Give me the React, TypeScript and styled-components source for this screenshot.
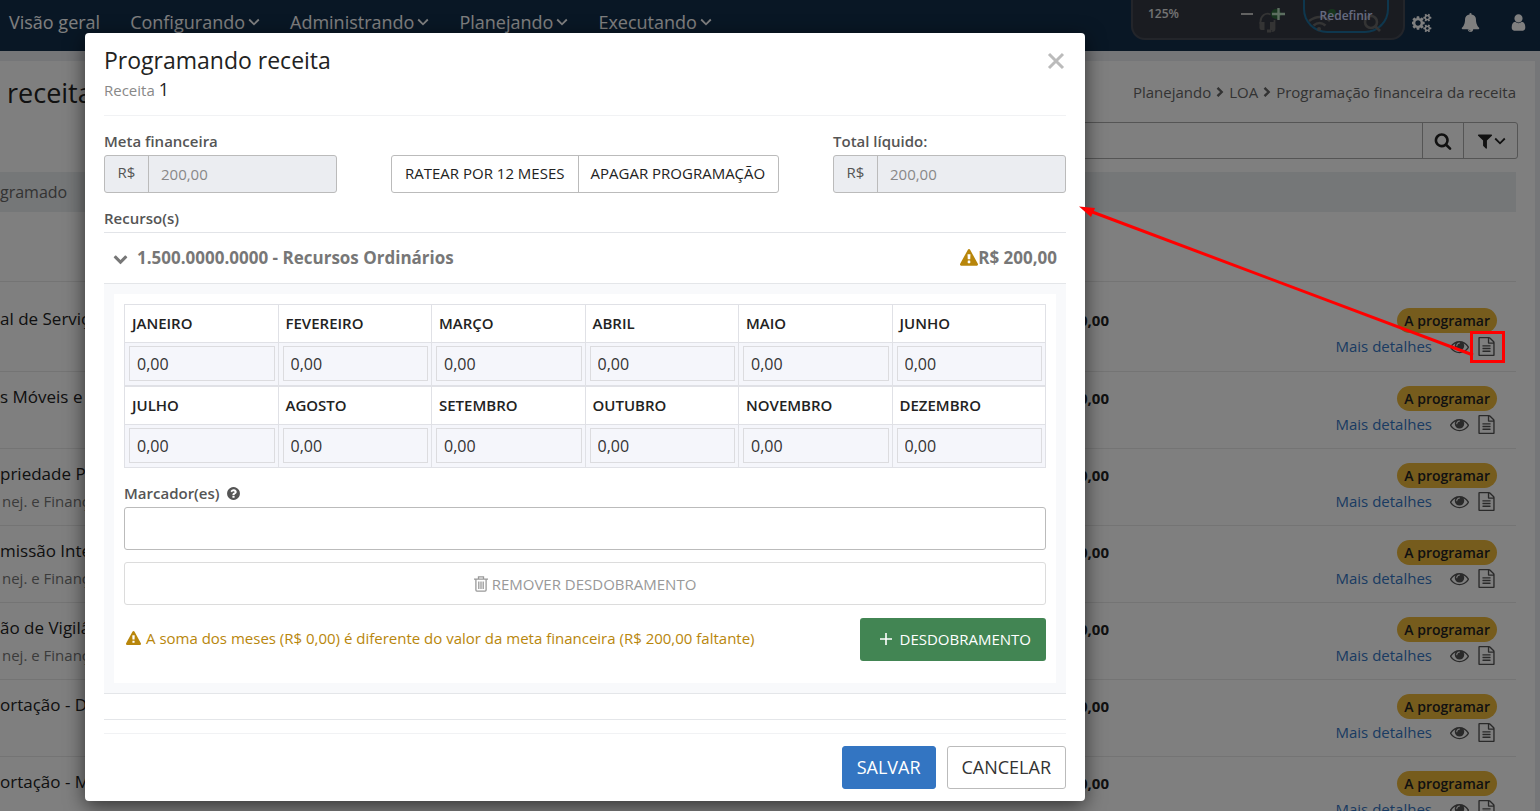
import React from "react";
import styled, { createGlobalStyle } from "styled-components";

const GlobalStyle = createGlobalStyle`
  *, *::before, *::after { box-sizing: border-box; }
  html, body { margin: 0; padding: 0; }
  body { font-family: "Open Sans", "Noto Sans", sans-serif; font-size: 15px; line-height: 20px; color: #222; overflow: hidden; }
  button, input { font-family: inherit; font-size: inherit; }
  button { cursor: pointer; margin: 0; }
  h1, h2, p { margin: 0; font-weight: 400; }
`;

/* ---------- icons ---------- */

const ICONS = {
  chevronDown: "M1683 808l-742 741q-19 19-45 19t-45-19l-742-741q-19-19-19-45.500t19-45.500l166-165q19-19 45-19t45 19l531 531 531-531q19-19 45-19t45 19l166 165q19 19 19 45.500t-19 45.500z",
  search: "M1216 832q0-185-131.500-316.500t-316.500-131.500-316.500 131.500-131.500 316.500 131.500 316.500 316.500 131.500 316.500-131.500 131.500-316.500zm512 832q0 52-38 90t-90 38q-54 0-90-38l-343-342q-179 124-399 124-143 0-273.500-55.500t-225-150-150-225-55.500-273.500 55.500-273.500 150-225 225-150 273.500-55.500 273.500 55.500 225 150 150 225 55.500 273.500q0 220-124 399l343 343q37 37 37 90z",
  filter: "M1595 295q17 41-14 70l-493 493v742q0 42-39 59-13 5-25 5-27 0-45-19l-256-256q-19-19-19-45v-486l-493-493q-31-29-14-70 17-39 59-39h1280q42 0 59 39z",
  eye: "M1664 960q-152-236-381-353 61 104 61 225 0 185-131.500 316.500t-316.500 131.500-316.500-131.500-131.500-316.500q0-121 61-225-229 117-381 353 133 205 333.500 326.500t434.500 121.500 434.500-121.500 333.500-326.500zm-720-384q0-20-14-34t-34-14q-125 0-214.500 89.500t-89.500 214.500q0 20 14 34t34 14 34-14 14-34q0-86 61-147t147-61q20 0 34-14t14-34zm848 384q0 34-20 69-140 230-376.500 368.500t-499.500 138.500-499.500-139-376.500-368q-20-35-20-69t20-69q140-229 376.500-368t499.500-139 499.500 139 376.500 368q20 35 20 69z",
  fileText: "M1596 380q28 28 48 76t20 88v1152q0 40-28 68t-68 28h-1344q-40 0-68-28t-28-68v-1600q0-40 28-68t68-28h896q40 0 88 20t76 48zm-444-244v376h376q-10-29-22-41l-313-313q-12-12-41-22zm384 1528v-1024h-416q-40 0-68-28t-28-68v-416h-768v1536h1280zm-1024-864q0-14 9-23t23-9h704q14 0 23 9t9 23v64q0 14-9 23t-23 9h-704q-14 0-23-9t-9-23v-64zm736 224q14 0 23 9t9 23v64q0 14-9 23t-23 9h-704q-14 0-23-9t-9-23v-64q0-14 9-23t23-9h704zm0 256q14 0 23 9t9 23v64q0 14-9 23t-23 9h-704q-14 0-23-9t-9-23v-64q0-14 9-23t23-9h704z",
  warning: "M1024 1375v-190q0-14-9.500-23.500t-22.500-9.500h-192q-13 0-22.500 9.500t-9.500 23.500v190q0 14 9.500 23.500t22.500 9.500h192q13 0 22.500-9.500t9.500-23.500zm-2-374l18-459q0-12-10-19-13-11-24-11h-220q-11 0-24 11-10 7-10 21l17 457q0 10 10 16.500t24 6.500h185q14 0 23.500-6.500t10.500-16.500zm-14-934l768 1408q35 63-2 126-17 29-46.500 46t-63.500 17h-1536q-34 0-63.500-17t-46.500-46q-37-63-2-126l768-1408q17-31 47-49t65-18 65 18 47 49z",
  question: "M1024 1376v-192q0-14-9-23t-23-9h-192q-14 0-23 9t-9 23v192q0 14 9 23t23 9h192q14 0 23-9t9-23zm256-672q0-88-55.500-163t-138.500-116-170-41q-243 0-371 213-15 24 8 42l132 100q7 6 19 6 16 0 25-12 53-68 86-92 34-24 86-24 48 0 85.500 26t37.500 59q0 38-20 61t-68 45q-63 28-115.500 86.500t-52.500 125.500v36q0 14 9 23t23 9h192q14 0 23-9t9-23q0-19 21.500-49.500t54.500-49.500q32-18 49-28.500t46-35 44.500-48 28-60.500 12.500-81zm384 192q0 209-103 385.500t-279.500 279.500-385.500 103-385.500-103-279.500-279.500-103-385.500 103-385.500 279.500-279.500 385.500-103 385.500 103 279.500 279.500 103 385.500z",
  bell: "M912 1696q0-16-16-16-59 0-101.500-42.500t-42.500-101.500q0-16-16-16t-16 16q0 73 51.500 124.500t124.500 51.500q16 0 16-16zm816-288q0 52-38 90t-90 38h-448q0 106-75 181t-181 75-181-75-75-181h-448q-52 0-90-38t-38-90q50-42 91-88t85-119.500 74.500-158.500 50-206 19.500-260q0-152 117-282.500t307-158.500q-8-19-8-39 0-40 28-68t68-28 68 28 28 68q0 20-8 39 190 28 307 158.500t117 282.500q0 139 19.500 260t50 206 74.500 158.500 85 119.500 91 88z",
  user: "M1536 1399q0 109-62.500 187t-150.500 78h-854q-88 0-150.500-78t-62.500-187q0-85 8.500-160.500t31.500-152 58.500-131 94-89 134.500-34.500q131 128 313 128t313-128q76 0 134.500 34.500t94 89 58.500 131 31.500 152 8.500 160.500zm-256-887q0 159-112.500 271.500t-271.500 112.500-271.500-112.500-112.500-271.500 112.500-271.500 271.500-112.500 271.500 112.500 112.500 271.500z",
  cogs: "M832 896q0-106-75-181t-181-75-181 75-75 181 75 181 181 75 181-75 75-181zm768 512q0-52-38-90t-90-38-90 38-38 90q0 53 37.500 90.500t90.500 37.500 90.500-37.500 37.500-90.500zm0-1024q0-52-38-90t-90-38-90 38-38 90q0 53 37.500 90.500t90.500 37.500 90.500-37.500 37.500-90.500zm-384 421v185q0 10-7 19.500t-16 10.500l-155 24q-11 35-32 76 34 48 90 115 7 11 7 20 0 12-7 19-23 30-82.500 89.500t-78.500 59.500q-11 0-21-7l-115-90q-37 19-77 31-11 108-23 155-7 24-30 24h-186q-11 0-20-7.500t-10-17.500l-23-153q-34-10-75-31l-118 89q-7 7-20 7-11 0-21-8-144-133-144-160 0-9 7-19 10-14 41-53t47-61q-23-44-35-82l-152-24q-10-1-17-9.500t-7-19.500v-185q0-10 7-19.500t16-10.500l155-24q11-35 32-76-34-48-90-115-7-11-7-20 0-12 7-20 22-30 82-89t79-59q11 0 21 7l115 90q34-18 77-32 11-108 23-154 7-24 30-24h186q11 0 20 7.500t10 17.500l23 153q34 10 75 31l118-89q8-7 20-7 11 0 21 8 144 133 144 160 0 8-7 19-12 16-42 54t-45 60q23 48 34 82l152 23q10 2 17 10.500t7 19.500zm640 533v140q0 16-149 31-12 27-30 52 51 113 51 138 0 4-4 7-122 71-124 71-8 0-46-47t-52-68q-20 2-30 2t-30-2q-14 21-52 68t-46 47q-2 0-124-71-4-3-4-7 0-25 51-138-18-25-30-52-149-15-149-31v-140q0-16 149-31 13-29 30-52-51-113-51-138 0-4 4-7 4-2 35-20t59-34 30-16q8 0 46 46.500t52 67.500q20-2 30-2t30 2q51-71 92-112l6-2q4 0 124 70 4 3 4 7 0 25-51 138 17 23 30 52 149 15 149 31zm0-1024v140q0 16-149 31-12 27-30 52 51 113 51 138 0 4-4 7-122 71-124 71-8 0-46-47t-52-68q-20 2-30 2t-30-2q-14 21-52 68t-46 47q-2 0-124-71-4-3-4-7 0-25 51-138-18-25-30-52-149-15-149-31v-140q0-16 149-31 13-29 30-52-51-113-51-138 0-4 4-7 4-2 35-20t59-34 30-16q8 0 46 46.500t52 67.500q20-2 30-2t30 2q51-71 92-112l6-2q4 0 124 70 4 3 4 7 0 25-51 138 17 23 30 52 149 15 149 31z",
};

const Svg = styled.svg`
  display: block;
  flex: none;
  fill: currentColor;
`;

type IconProps = { name: keyof typeof ICONS; size: number; wide?: boolean };

const Icon = ({ name, size, wide }: IconProps) => (
  <Svg width={size} height={size} viewBox={wide ? "0 0 1920 1792" : "0 0 1792 1792"} aria-hidden="true">
    <path d={ICONS[name]} />
  </Svg>
);

const AngleDown = () => (
  <Svg width="12" height="8" viewBox="0 0 12 8" aria-hidden="true">
    <path d="M1.200 1.500l4.800 4.800 4.800-4.800" fill="none" stroke="currentColor" strokeWidth="1.800" />
  </Svg>
);

const CrumbChevron = () => (
  <Svg width="8" height="10" viewBox="0 0 8 10" aria-hidden="true">
    <path d="M1.500 .8l4.200 4.200-4.200 4.200" fill="none" stroke="currentColor" strokeWidth="2.400" />
  </Svg>
);

const TrashIcon = () => (
  <Svg width="14" height="16" viewBox="0 0 14 16" aria-hidden="true">
    <path
      d="M0 3.200h14M4.500 3V.9h5V3M1.900 3.500v10.600q0 1 1 1h8.200q1 0 1-1V3.500M4.800 5.500v7.500M7 5.500v7.500M9.200 5.500v7.500"
      fill="none"
      stroke="currentColor"
      strokeWidth="1.300"
    />
  </Svg>
);

/* ---------- page behind the dialog ---------- */

const Screen = styled.div`
  position: relative;
  height: 100vh;
  overflow: hidden;
  background: #ebedf1;
`;

const TopBar = styled.header`
  position: relative;
  display: flex;
  align-items: center;
  height: 51px;
  padding: 0 12px 8px 9px;
  background: #132e4b;
  color: #fff;
`;

const Nav = styled.nav`
  display: flex;
  gap: 30px;
  flex: 1;
`;

const NavLink = styled.a`
  display: flex;
  align-items: center;
  gap: 3px;
  color: inherit;
  text-decoration: none;
  font-size: 18px;
  line-height: 24px;
  white-space: nowrap;
`;

const TopActions = styled.div`
  display: flex;
  align-items: center;
  gap: 29px;
  padding-top: 2px;
`;

const IconButton = styled.button`
  display: flex;
  padding: 0;
  border: 0;
  background: none;
  color: inherit;
`;

const ZoomPopup = styled.div`
  position: absolute;
  top: 0;
  right: 135px;
  display: flex;
  width: 274px;
  height: 40px;
  padding: 0 14px 0 15px;
  border: 2px solid #474b55;
  border-top: 0;
  border-radius: 0 0 14px 14px;
  background: #343843;
  font-size: 12px;
  font-weight: 600;
  line-height: 28px;
  color: #e6e6e6;
`;

const ZoomLevel = styled.span`
  flex: 1;
`;

const ZoomTools = styled.svg`
  flex: none;
  margin-right: 16px;
`;

const ResetButton = styled.button`
  position: relative;
  width: 86px;
  height: 33px;
  padding: 0;
  border: 2px solid #1d6f9c;
  border-top: 0;
  border-radius: 0 0 24px 24px;
  background: none;
  color: #cdd6ff;
  font-size: 12px;
  font-weight: 600;
  line-height: 28px;
`;

const ResetText = styled.span`
  position: relative;
`;

const ResetGhosts = styled.svg`
  position: absolute;
  left: 0;
  top: 0;
`;

const Card = styled.main`
  margin: 10px 5px 0 0;
  padding: 13px 19px 0 0;
  min-height: 100vh;
  background: #fff;
`;

const PageHead = styled.div`
  display: flex;
  align-items: center;
  justify-content: space-between;
  height: 38px;
  padding-left: 7px;
`;

const PageTitle = styled.h1`
  font-size: 27px;
  line-height: 38px;
`;

const Crumbs = styled.nav`
  display: flex;
  align-items: center;
  gap: 5px;
  padding-bottom: 2px;
  color: #666;
`;

const CrumbLink = styled.a`
  color: inherit;
  text-decoration: none;
`;

const SearchBar = styled.form`
  display: flex;
  height: 37px;
  margin: 10px -2px 13px 30%;
  border: 1px solid #aaa;
  border-radius: 3px;
`;

const SearchInput = styled.input`
  flex: 1;
  border: 0;
  background: none;
  outline: 0;
`;

const SearchButton = styled.button<{ $width: number }>`
  display: flex;
  align-items: center;
  justify-content: center;
  width: ${(p) => p.$width}px;
  padding: 0;
  border: 0;
  border-left: 1px solid #aaa;
  background: none;
  color: #222;
`;

const ListHead = styled.div`
  height: 40px;
  margin-bottom: 69px;
  background: #ebeef1;
  color: #666;
  font-size: 16px;
  line-height: 40px;
`;

const Row = styled.div<{ $tall?: boolean }>`
  display: grid;
  grid-template-columns: 1fr 100px 407px;
  height: ${(p) => (p.$tall ? 90 : 77)}px;
  padding-top: ${(p) => (p.$tall ? 26 : 14)}px;
  border-top: 1px solid #e9e9e9;
`;

const RowText = styled.div`
  overflow: hidden;
  white-space: nowrap;
`;

const RowName = styled.p`
  font-size: 17px;
  line-height: 22px;
`;

const RowOrg = styled.p`
  padding: 4px 0 0 2px;
  color: #777;
  line-height: 24px;
`;

const RowValue = styled.strong`
  font-size: 15px;
  font-weight: 700;
  line-height: 24px;
  text-align: right;
`;

const RowStatus = styled.div`
  display: flex;
  flex-direction: column;
  align-items: flex-end;
  padding-right: 19px;
`;

const Badge = styled.span`
  height: 25px;
  padding: 0 7px;
  border-radius: 13px;
  background: #edb83a;
  font-size: 14px;
  font-weight: 600;
  line-height: 25px;
`;

const RowActions = styled.div`
  display: flex;
  align-items: center;
  height: 26px;
  padding-right: 1px;
`;

const DetailLink = styled.a`
  margin-right: 18px;
  color: #3476c4;
  text-decoration: none;
`;

const RowIcon = styled(IconButton)`
  color: #555;
  margin-left: 8px;

  &:first-of-type { margin-left: 0; }
`;

/* ---------- dialog ---------- */

const Backdrop = styled.div`
  position: absolute;
  inset: 0;
  padding: 33px 85px;
  background: rgba(0, 0, 0, 0.5);
`;

const Dialog = styled.section`
  width: 100%;
  max-width: 1000px;
  padding: 0 19px 12px;
  border-radius: 4px;
  background: #fff;
  box-shadow: 0 5px 20px rgba(0, 0, 0, 0.6);
`;

const DialogHead = styled.header`
  display: flex;
  justify-content: space-between;
  height: 83px;
  padding-top: 11px;
  border-bottom: 1px solid #f1f2f4;
`;

const DialogTitle = styled.h2`
  font-size: 23px;
  line-height: 32px;
`;

const DialogSub = styled.p`
  color: #888;
  line-height: 26px;
`;

const SubValue = styled.span`
  color: #222;
  font-size: 18px;
`;

const CloseButton = styled(IconButton)`
  height: 18px;
  margin: 8px 1px 0 0;
  color: #bbb;
`;

const Summary = styled.div`
  display: flex;
  align-items: flex-end;
  padding-top: 15px;
`;

const Field = styled.div`
  width: 233px;
`;

const Label = styled.label`
  display: flex;
  align-items: center;
  gap: 6px;
  height: 24px;
  padding-bottom: 4px;
  color: #555;
  font-weight: 600;
`;

const InputGroup = styled.div`
  display: flex;
  height: 38px;
  border: 1px solid #bbb;
  border-radius: 3px;
  background: #ebedf1;
`;

const Addon = styled.span`
  width: 44px;
  border-right: 1px solid #bbb;
  color: #555;
  line-height: 33px;
  text-align: center;
`;

const GroupInput = styled.input`
  flex: 1;
  min-width: 0;
  padding: 0 12px;
  border: 0;
  background: none;
  color: #888;
`;

const ButtonGroup = styled.div`
  display: flex;
  height: 38px;
  margin: 0 auto 0 54px;
  border: 1px solid #bbb;
  border-radius: 3px;
`;

const GroupButton = styled.button`
  padding: 0 13px 2px;
  border: 0;
  background: none;
  color: #222;
  white-space: nowrap;

  & + & { border-left: 1px solid #bbb; padding-left: 12px; }
`;

const SectionLabel = styled.p`
  padding: 13px 0 2px;
  color: #555;
  font-weight: 600;
  line-height: 24px;
`;

const ResourceHead = styled.div`
  display: flex;
  align-items: center;
  height: 51px;
  padding: 0 9px;
  border-top: 1px solid #e2e4e8;
  color: #777;
  font-size: 17px;
  font-weight: 700;
`;

const ResourceName = styled.span`
  flex: 1;
  padding-left: 9px;
`;

const Warn = styled.span`
  display: flex;
  align-items: center;
  gap: 5px;
  color: #b8860b;
`;

const ResourcePanel = styled.div`
  padding: 10px;
  border: solid #e4e6e9;
  border-width: 1px 0;
  background: #f8f9fb;
`;

const ResourceBody = styled.div`
  padding: 10px 10px 22px;
  background: #fff;
`;

const MonthTable = styled.table`
  width: 100%;
  table-layout: fixed;
  border-collapse: collapse;
`;

const MonthName = styled.th`
  height: 38px;
  padding: 0 7px 2px;
  border: 1px solid #e0e1e6;
  font-weight: 600;
  text-align: left;
`;

const MonthCell = styled.td`
  height: 43px;
  padding: 3px 3px 4px 4px;
  border: 1px solid #e0e1e6;
  background: #f5f6fb;
`;

const MonthInput = styled.input`
  display: block;
  width: 100%;
  height: 35px;
  padding: 0 7px;
  border: 1px solid #dcdcdf;
  background: none;
  color: #333;
  font-size: 16px;
`;

const TagBlock = styled.div`
  padding-top: 15px;
`;

const TagInput = styled.input`
  display: block;
  width: 100%;
  height: 43px;
  padding: 0 12px;
  border: 1px solid #bbb;
  border-radius: 3px;
`;

const RemoveButton = styled.button`
  display: flex;
  align-items: center;
  justify-content: center;
  gap: 4px;
  width: 100%;
  height: 43px;
  margin: 12px 0 13px;
  border: 1px solid #dcdcdc;
  border-radius: 3px;
  background: #fff;
  color: #999;
`;

const SumRow = styled.div`
  display: flex;
  align-items: flex-start;
  justify-content: space-between;
`;

const SumWarn = styled(Warn)`
  height: 40px;
  padding-left: 2px;
`;

const AddButton = styled.button`
  display: flex;
  align-items: center;
  gap: 8px;
  height: 43px;
  padding: 0 15px 2px 20px;
  border: 0;
  border-radius: 3px;
  background: #428553;
  color: #fff;
`;

const BodyEnd = styled.div`
  height: 26px;
  border-bottom: 1px solid #e4e6e9;
`;

const DialogFoot = styled.footer`
  display: flex;
  justify-content: flex-end;
  gap: 11px;
  margin-top: 13px;
  padding-top: 12px;
  border-top: 1px solid #f1f2f4;
`;

const FootButton = styled.button<{ $primary?: boolean }>`
  height: 43px;
  padding: 0 14px 2px;
  border: 1px solid ${(p) => (p.$primary ? "#3375c2" : "#bbb")};
  border-radius: 3px;
  background: ${(p) => (p.$primary ? "#3375c2" : "#fff")};
  color: ${(p) => (p.$primary ? "#fff" : "#333")};
  font-size: 18px;
`;

const Callout = styled.svg`
  position: absolute;
  top: 200px;
  right: 30px;
  pointer-events: none;
`;

/* ---------- data ---------- */

const NAV = ["Configurando", "Administrando", "Planejando", "Executando"];

const ROWS = [
  { name: "al de Serviços", org: "" },
  { name: "s Móveis e", org: "" },
  { name: "priedade Predial", org: "nej. e Finanças" },
  { name: "missão Inter", org: "nej. e Finanças" },
  { name: "ão de Vigilância", org: "nej. e Finanças" },
  { name: "ortação - D", org: "" },
  { name: "ortação - M", org: "" },
];

const MONTHS = [
  ["JANEIRO", "FEVEREIRO", "MARÇO", "ABRIL", "MAIO", "JUNHO"],
  ["JULHO", "AGOSTO", "SETEMBRO", "OUTUBRO", "NOVEMBRO", "DEZEMBRO"],
];

const MoneyField = ({ id, label }: { id: string; label: string }) => (
  <Field>
    <Label htmlFor={id}>{label}</Label>
    <InputGroup>
      <Addon>R$</Addon>
      <GroupInput id={id} defaultValue="200,00" readOnly />
    </InputGroup>
  </Field>
);

const Months = ({ names }: { names: string[] }) => (
  <MonthTable>
    <thead>
      <tr>
        {names.map((m) => (
          <MonthName key={m} scope="col">{m}</MonthName>
        ))}
      </tr>
    </thead>
    <tbody>
      <tr>
        {names.map((m) => (
          <MonthCell key={m}>
            <MonthInput aria-label={m} defaultValue="0,00" />
          </MonthCell>
        ))}
      </tr>
    </tbody>
  </MonthTable>
);

export default function App() {
  return (
    <Screen>
      <GlobalStyle />
      <TopBar>
        <Nav>
          <NavLink href="#">Visão geral</NavLink>
          {NAV.map((item) => (
            <NavLink href="#" key={item}>
              {item}
              <AngleDown />
            </NavLink>
          ))}
        </Nav>
        <ZoomPopup>
          <ZoomLevel>125%</ZoomLevel>
          <ZoomTools width="46" height="36" viewBox="0 0 46 36" aria-hidden="true">
            <circle cx="35" cy="14" r="5" fill="#2f6a3c" />
            <path d="M19.500 24v-2a7 8 0 0 1 10-7.500M33.500 20v9q0 2-3 2.200" fill="none" stroke="#686868" strokeWidth="1.800" />
            <path d="M18.500 22h5v8h-3q-2 0-2-2zM29 22h5v8h-5zM26 29.500h4v3h-4z" fill="#686868" />
            <path d="M0 14h12" stroke="#c4c4c4" strokeWidth="2" />
            <path d="M31 14h13M37.500 8v12" stroke="#b9dcc0" strokeWidth="2.400" />
          </ZoomTools>
          <ResetButton>
            <ResetGhosts width="82" height="33" viewBox="0 0 82 33" aria-hidden="true">
              <circle cx="27" cy="13" r="4" fill="#2f6a3c" />
              <g fill="none" stroke="#686868" strokeWidth="2.600">
                <path d="M4 21q11-8 21 0M8.500 25.500q6-5 12 0" />
                <circle cx="66" cy="22" r="6" />
                <path d="M70 26l5 5" />
              </g>
              <circle cx="14" cy="29" r="2" fill="#686868" />
            </ResetGhosts>
            <ResetText>Redefinir</ResetText>
          </ResetButton>
        </ZoomPopup>
        <TopActions>
          <IconButton aria-label="Configurações"><Icon name="cogs" size={20} wide /></IconButton>
          <IconButton aria-label="Notificações"><Icon name="bell" size={19} /></IconButton>
          <IconButton aria-label="Usuário"><Icon name="user" size={19} /></IconButton>
        </TopActions>
      </TopBar>

      <Card>
        <PageHead>
          <PageTitle>receita</PageTitle>
          <Crumbs aria-label="Caminho">
            <CrumbLink href="#">Planejando</CrumbLink>
            <CrumbChevron />
            <CrumbLink href="#">LOA</CrumbLink>
            <CrumbChevron />
            <span>Programação financeira da receita</span>
          </Crumbs>
        </PageHead>
        <SearchBar>
          <SearchInput aria-label="Pesquisar" />
          <SearchButton type="button" $width={41} aria-label="Buscar">
            <Icon name="search" size={18} />
          </SearchButton>
          <SearchButton type="button" $width={54} aria-label="Filtrar">
            <Icon name="filter" size={18} />
            <AngleDown />
          </SearchButton>
        </SearchBar>
        <ListHead>gramado</ListHead>
        {ROWS.map((row, i) => (
          <Row key={row.name} $tall={i === 0}>
            <RowText>
              <RowName>{row.name}</RowName>
              {row.org && <RowOrg>{row.org}</RowOrg>}
            </RowText>
            <RowValue>200,00</RowValue>
            <RowStatus>
              <Badge>A programar</Badge>
              <RowActions>
                <DetailLink href="#">Mais detalhes</DetailLink>
                <RowIcon aria-label="Visualizar"><Icon name="eye" size={19} /></RowIcon>
                <RowIcon aria-label="Programar"><Icon name="fileText" size={19} /></RowIcon>
              </RowActions>
            </RowStatus>
          </Row>
        ))}
      </Card>

      <Backdrop>
        <Dialog role="dialog" aria-labelledby="dialog-title">
          <DialogHead>
            <div>
              <DialogTitle id="dialog-title">Programando receita</DialogTitle>
              <DialogSub>
                Receita <SubValue>1</SubValue>
              </DialogSub>
            </div>
            <CloseButton aria-label="Fechar">
              <Svg width="18" height="18" viewBox="0 0 18 18">
                <path d="M2 2l14 14M16 2L2 16" stroke="currentColor" strokeWidth="3" />
              </Svg>
            </CloseButton>
          </DialogHead>

          <Summary>
            <MoneyField id="meta" label="Meta financeira" />
            <ButtonGroup>
              <GroupButton>RATEAR POR 12 MESES</GroupButton>
              <GroupButton>APAGAR PROGRAMAÇÃO</GroupButton>
            </ButtonGroup>
            <MoneyField id="total" label="Total líquido:" />
          </Summary>

          <SectionLabel>Recurso(s)</SectionLabel>
          <ResourceHead>
            <Icon name="chevronDown" size={15} />
            <ResourceName>1.500.0000.0000 - Recursos Ordinários</ResourceName>
            <Warn><Icon name="warning" size={18} /></Warn>
            <span>R$ 200,00</span>
          </ResourceHead>

          <ResourcePanel>
            <ResourceBody>
              {MONTHS.map((names) => (
                <Months key={names[0]} names={names} />
              ))}
              <TagBlock>
                <Label htmlFor="tags">
                  Marcador(es) <Icon name="question" size={15} />
                </Label>
                <TagInput id="tags" />
              </TagBlock>
              <RemoveButton>
                <TrashIcon />
                REMOVER DESDOBRAMENTO
              </RemoveButton>
              <SumRow>
                <SumWarn>
                  <Icon name="warning" size={15} />
                  A soma dos meses (R$ 0,00) é diferente do valor da meta financeira (R$ 200,00 faltante)
                </SumWarn>
                <AddButton>
                  <Svg width="12" height="12" viewBox="0 0 12 12" aria-hidden="true">
                    <path d="M0 6h12M6 0v12" stroke="currentColor" strokeWidth="1.600" />
                  </Svg>
                  DESDOBRAMENTO
                </AddButton>
              </SumRow>
            </ResourceBody>
          </ResourcePanel>
          <BodyEnd />

          <DialogFoot>
            <FootButton $primary>SALVAR</FootButton>
            <FootButton>CANCELAR</FootButton>
          </DialogFoot>
        </Dialog>
      </Backdrop>

      <Callout width="431" height="164" viewBox="0 0 431 164" aria-hidden="true">
        <rect x="392.500" y="132.500" width="32" height="29" fill="none" stroke="#f00" strokeWidth="3" />
        <path d="M8 10L394 155" stroke="#f00" strokeWidth="3" />
        <path d="M0 6.500l16 1.500-4 9z" fill="#f00" />
      </Callout>
    </Screen>
  );
}
